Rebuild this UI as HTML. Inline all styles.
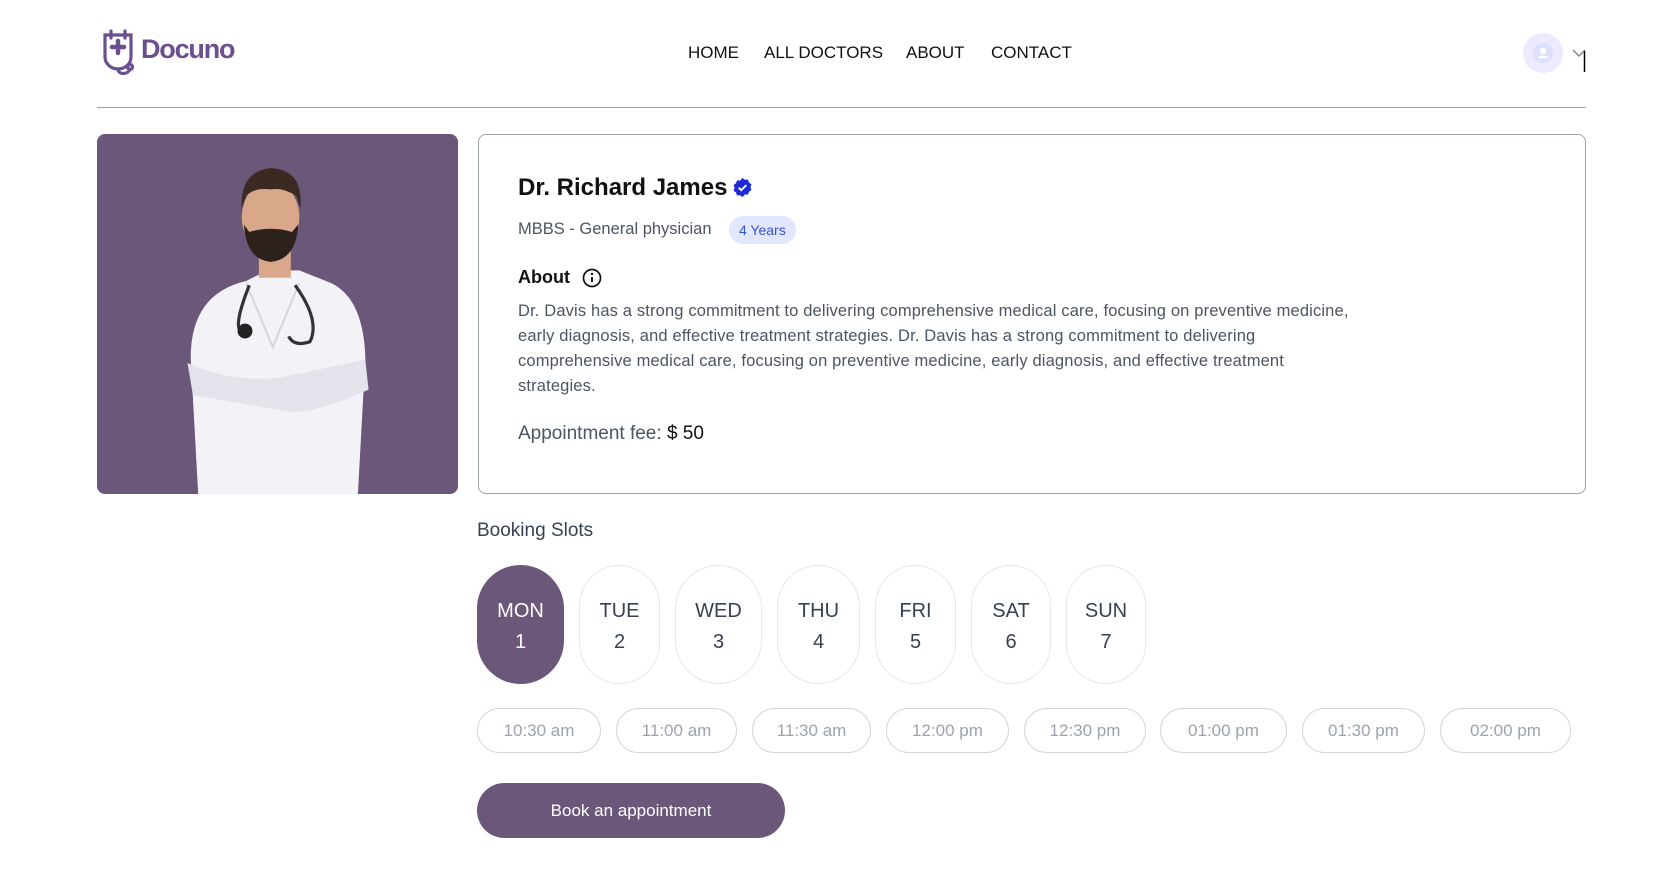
<!DOCTYPE html>
<html><head><meta charset="utf-8"><style>
*{margin:0;padding:0;box-sizing:border-box}
body{width:1668px;height:874px;background:#fff;font-family:"Liberation Sans",sans-serif;position:relative;overflow:hidden;color:#111}
.a{position:absolute;white-space:nowrap}
.nav{font-size:17px;font-weight:500;color:#111;top:43px}
.day{position:absolute;top:565px;height:119px;border:1px solid #e5e7eb;border-radius:44px;text-align:center;font-size:20px;color:#374151;padding-top:30px;line-height:31px}
.day.on{background:#6b5779;color:#fff;border-color:#6b5779}
.slot{position:absolute;top:708px;height:45px;border:1px solid #d1d5db;border-radius:23px;text-align:center;line-height:43px;font-size:17px;color:#9ca3af}
</style></head><body>
<svg class="a" style="left:101px;top:29px" width="34" height="48" viewBox="0 0 34 48" fill="none" stroke="#6b4f8f" stroke-width="3.2" stroke-linecap="round">
<path d="M4 6h26v22a13 12 0 0 1-26 0z"/><path d="M10 2v7M24 2v7"/>
<path d="M17 12v12M11 18h12" stroke-width="4.5"/>
<path d="M17 40c0 6 10 6 12 0"/><circle cx="29" cy="38" r="2.5"/>
</svg>
<div class="a" style="left:141px;top:34px;font-size:27px;font-weight:700;color:#6b4f8f;letter-spacing:-1.2px">Docuno</div>
<div class="a nav" style="left:688px">HOME</div>
<div class="a nav" style="left:764px">ALL DOCTORS</div>
<div class="a nav" style="left:906px">ABOUT</div>
<div class="a nav" style="left:991px">CONTACT</div>
<div class="a" style="left:1523px;top:33px;width:40px;height:40px;border-radius:50%;background:#ede9fe"></div>
<svg class="a" style="left:1531px;top:41px" width="24" height="24" viewBox="0 0 24 24"><circle cx="12" cy="12" r="10" fill="#dbe0fb"/><circle cx="12" cy="10" r="3.2" fill="#fff"/><path d="M6.5 17c1-3 10-3 11 0z" fill="#fff"/></svg>
<svg class="a" style="left:1572px;top:47px" width="16" height="28"><path d="M1 3l6 6 6-6" stroke="#888" stroke-width="1.5" fill="none"/><path d="M12.5 4v21" stroke="#000" stroke-width="1.5"/></svg>
<div class="a" style="left:97px;top:107px;width:1489px;height:1px;background:#9ca3af"></div>

<div class="a" style="left:97px;top:134px;width:361px;height:360px;background:#6b5779;border-radius:8px;overflow:hidden">
<svg width="361" height="360" viewBox="0 0 339 338">
<path d="M95 338L88 210Q88 150 140 138L160 128L190 128L215 138Q250 150 252 210L245 338z" fill="#f3f2f6"/>
<path d="M85 215Q130 235 175 228L252 212L255 240Q200 265 175 260L90 245z" fill="#e4e2ea"/>
<path d="M140 140L165 200L190 140" fill="none" stroke="#d8d6de" stroke-width="2"/>
<rect x="152" y="110" width="30" height="25" fill="#d9a88a"/>
<ellipse cx="163" cy="78" rx="27" ry="34" fill="#d9a88a"/>
<path d="M136 70Q134 35 163 32Q194 33 191 70L187 58Q175 50 163 52Q148 50 140 58z" fill="#3a2a22"/>
<path d="M138 85Q140 118 163 120Q187 118 189 85L183 92Q163 86 143 92z" fill="#2d211b"/>
<path d="M143 142Q128 180 135 185M186 142Q210 175 200 195Q185 200 180 190" fill="none" stroke="#333" stroke-width="3"/>
<circle cx="139" cy="185" r="7" fill="#222"/>
</svg></div>

<div class="a" style="left:478px;top:134px;width:1108px;height:360px;border:1px solid #9ca3af;border-radius:8px"></div>
<div class="a" style="left:518px;top:174px;font-size:24px;font-weight:700;color:#111">Dr. Richard James</div>
<svg class="a" style="left:733px;top:178px" width="19" height="19" viewBox="0 0 20 20"><path d="M10 0l2.6 1.9 3.2-.2 1 3 2.6 1.9-1 3 1 3-2.6 1.9-1 3-3.2-.2L10 20l-2.6-1.9-3.2.2-1-3L.6 13.4l1-3-1-3 2.6-1.9 1-3 3.2.2z" fill="#1d2ad8"/><path d="M6 10.2l2.7 2.6L14 7.5" stroke="#fff" stroke-width="2" fill="none"/></svg>
<div class="a" style="left:518px;top:220px;font-size:16.5px;color:#4b5563">MBBS - General physician</div>
<div class="a" style="left:729px;top:216px;height:28px;padding:0 10px;border-radius:14px;background:#e0e7ff;color:#3b50d0;font-size:14px;line-height:28px">4 Years</div>
<div class="a" style="left:518px;top:267px;font-size:18px;font-weight:600;color:#111">About</div>
<svg class="a" style="left:582px;top:268px" width="20" height="20" viewBox="0 0 20 20"><circle cx="10" cy="10" r="8.5" stroke="#111" stroke-width="1.7" fill="none"/><path d="M10 9v5" stroke="#111" stroke-width="1.9"/><circle cx="10" cy="6" r="1.2" fill="#111"/></svg>
<div class="a" style="left:518px;top:299px;font-size:16.5px;line-height:25px;color:#4b5563;letter-spacing:0.15px">Dr. Davis has a strong commitment to delivering comprehensive medical care, focusing on preventive medicine,<br>early diagnosis, and effective treatment strategies. Dr. Davis has a strong commitment to delivering<br>comprehensive medical care, focusing on preventive medicine, early diagnosis, and effective treatment<br>strategies.</div>
<div class="a" style="left:518px;top:423px;font-size:19px;color:#4b5563">Appointment fee: <span style="color:#111">$ 50</span></div>

<div class="a" style="left:477px;top:520px;font-size:19px;color:#374151">Booking Slots</div>
<div class="day on" style="left:477px;width:87px">MON<br>1</div>
<div class="day" style="left:579px;width:81px">TUE<br>2</div>
<div class="day" style="left:675px;width:87px">WED<br>3</div>
<div class="day" style="left:777px;width:83px">THU<br>4</div>
<div class="day" style="left:875px;width:81px">FRI<br>5</div>
<div class="day" style="left:971px;width:80px">SAT<br>6</div>
<div class="day" style="left:1066px;width:80px">SUN<br>7</div>

<div class="slot" style="left:477px;width:124px">10:30 am</div>
<div class="slot" style="left:616px;width:121px">11:00 am</div>
<div class="slot" style="left:752px;width:119px">11:30 am</div>
<div class="slot" style="left:886px;width:123px">12:00 pm</div>
<div class="slot" style="left:1024px;width:122px">12:30 pm</div>
<div class="slot" style="left:1160px;width:127px">01:00 pm</div>
<div class="slot" style="left:1302px;width:123px">01:30 pm</div>
<div class="slot" style="left:1440px;width:131px">02:00 pm</div>

<div class="a" style="left:477px;top:783px;width:308px;height:55px;border-radius:28px;background:#6b5779;color:#fff;font-size:17px;text-align:center;line-height:55px">Book an appointment</div>
</body></html>
